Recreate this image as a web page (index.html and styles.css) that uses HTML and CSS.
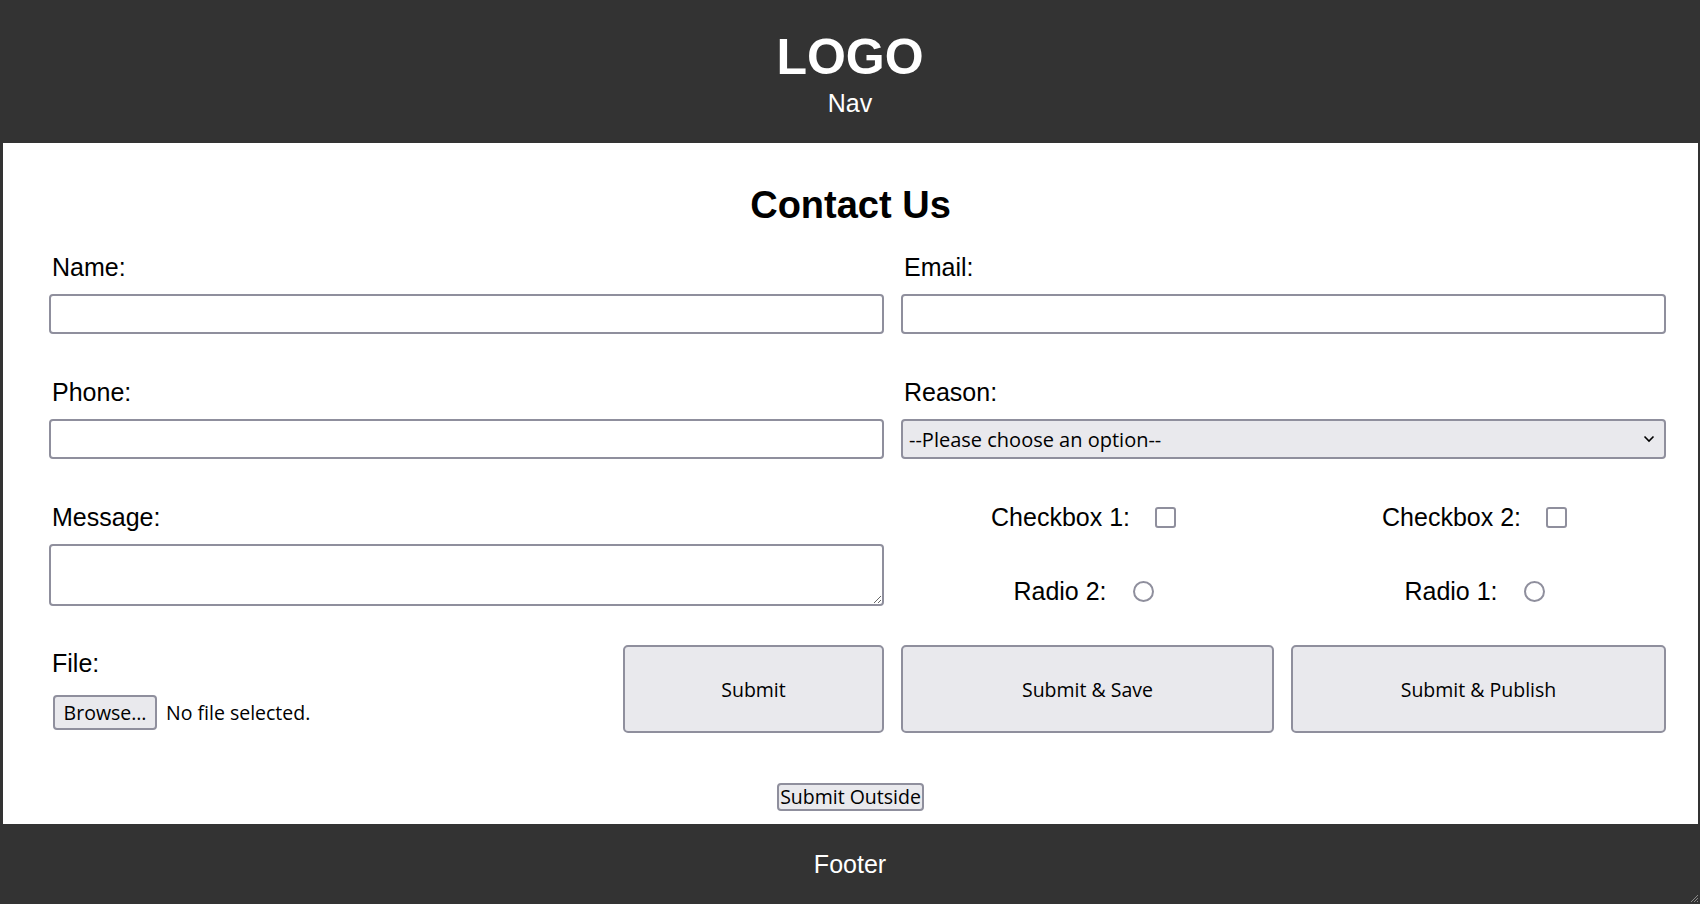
FILE: index.html
```html
<!DOCTYPE html>
<html lang="en">
<head>
<meta charset="utf-8">
<title>Contact Us</title>
<link rel="stylesheet" href="styles.css">
</head>
<body>
<header class="header">
  <h1 class="logo">LOGO</h1>
  <div class="nav">Nav</div>
</header>
<main class="main">
  <h2 class="title">Contact Us</h2>
  <form class="form" id="contact">
    <div class="field span2">
      <label for="name">Name:</label>
      <input class="text" id="name" type="text">
    </div>
    <div class="field span2">
      <label for="email">Email:</label>
      <input class="text" id="email" type="text">
    </div>
    <div class="field span2">
      <label for="phone">Phone:</label>
      <input class="text" id="phone" type="text">
    </div>
    <div class="field span2">
      <label for="reason">Reason:</label>
      <div class="select-wrap">
        <select id="reason" class="select">
          <option>--Please choose an option--</option>
        </select>
        <svg class="chev" width="12" height="8" viewBox="0 0 12 8"><path d="M1.5 1.5 L6 6 L10.5 1.5" fill="none" stroke="#000" stroke-width="1.6"/></svg>
      </div>
    </div>
    <div class="field span2">
      <label for="message">Message:</label>
      <textarea id="message" class="textarea"></textarea>
    </div>
    <div class="checks">
      <div class="check"><label for="cb1">Checkbox 1:</label><input id="cb1" class="box" type="checkbox"></div>
      <div class="check"><label for="r2">Radio 2:</label><input id="r2" class="circle" type="radio" name="r"></div>
    </div>
    <div class="checks">
      <div class="check"><label for="cb2">Checkbox 2:</label><input id="cb2" class="box" type="checkbox"></div>
      <div class="check"><label for="r1">Radio 1:</label><input id="r1" class="circle" type="radio" name="r"></div>
    </div>
    <div class="field file-field">
      <label>File:</label>
      <div class="file-row">
        <button type="button" class="browse">Browse…</button>
        <span class="nofile">No file selected.</span>
      </div>
    </div>
    <button type="submit" class="big">Submit</button>
    <button type="submit" class="big">Submit &amp; Save</button>
    <button type="submit" class="big">Submit &amp; Publish</button>
  </form>
  <div class="outside-wrap">
    <button type="submit" form="contact" class="outside">Submit Outside</button>
  </div>
</main>
<footer class="footer">
  Footer
  <svg class="grip" width="10" height="10" viewBox="0 0 10 10"><path d="M9 2 L2 9 M9 5 L5 9 M9 8 L8 9" stroke="#8a8a8a" stroke-width="1"/></svg>
</footer>
</body>
</html>
```

FILE: styles.css
```css
html, body {
  margin: 0;
  padding: 0;
}

body {
  background: #333333;
  font-family: "Liberation Sans", Arial, sans-serif;
  font-size: 25px;
  color: #000;
  height: 904px;
  display: flex;
  flex-direction: column;
  overflow: hidden;
}

.header {
  height: 143px;
  box-sizing: border-box;
  padding-top: 28px;
  text-align: center;
  color: #fff;
  flex: none;
}

.logo {
  margin: 0;
  font-size: 50px;
  line-height: 58px;
  font-weight: bold;
}

.nav {
  margin-top: 3px;
  line-height: 29px;
}

.main {
  flex: 1;
  background: #fff;
  margin: 0 2px 0 3px;
  padding-top: 40px;
  display: flex;
  flex-direction: column;
}

.title {
  margin: 0;
  font-size: 38px;
  line-height: 44px;
  font-weight: bold;
  text-align: center;
}

.form {
  display: grid;
  grid-template-columns: 557px 261px 373px 375px;
  column-gap: 17px;
  row-gap: 39px;
  align-items: start;
  margin: 21px 0 0 46px;
}

.field {
  display: flex;
  flex-direction: column;
}

.field > label {
  line-height: 29px;
  margin-top: 5px;
  margin-bottom: 12px;
  padding-left: 3px;
}

.file-field > label {
  margin-top: 4px;
  margin-bottom: 0;
}

.span2 {
  grid-column: span 2;
}

.text,
.textarea,
.select {
  box-sizing: border-box;
  width: 100%;
  border: 2px solid #8f8f9d;
  border-radius: 4px;
  margin: 0;
  font-family: "Open Sans", sans-serif;
  font-size: 19.5px;
  display: block;
}

.text {
  height: 40px;
  background: #fff;
}

.textarea {
  height: 62px;
  background: #fff;
  resize: vertical;
}

.select-wrap {
  position: relative;
}

.select {
  height: 40px;
  appearance: none;
  -webkit-appearance: none;
  background: #e9e9ed;
  color: #000;
  padding: 0 30px 0 6px;
  font-size: 20px;
}

.chev {
  position: absolute;
  right: 11px;
  top: 16px;
}

.checks {
  box-sizing: border-box;
  height: 108px;
  display: flex;
  flex-direction: column;
  align-items: center;
  justify-content: space-between;
  padding-top: 5px;
}

.check {
  display: flex;
  align-items: center;
  height: 29px;
  padding-right: 8px;
}

.box,
.circle {
  appearance: none;
  -webkit-appearance: none;
  box-sizing: border-box;
  border: 2px solid #8f8f9d;
  background: #fff;
  margin: 0;
}

.box {
  width: 21px;
  height: 21px;
  border-radius: 3px;
  margin-left: 25px;
}

.circle {
  width: 21px;
  height: 21px;
  border-radius: 50%;
  margin-left: 26px;
}

.file-row {
  display: flex;
  align-items: center;
  margin-top: 17px;
  padding-left: 4px;
  font-family: "Open Sans", sans-serif;
  font-size: 19.5px;
}

.browse,
.big,
.outside {
  font-family: "Open Sans", sans-serif;
  font-size: 19.5px;
  color: #000;
  background: #e9e9ed;
  border: 2px solid #8f8f9d;
  border-radius: 4px;
  box-sizing: border-box;
  margin: 0;
}

.browse {
  width: 104px;
  height: 35px;
  padding: 0;
}

.nofile {
  margin-left: 9px;
}

.big {
  height: 88px;
  width: 100%;
  border-radius: 5px;
}

.outside-wrap {
  text-align: center;
  margin-top: 48px;
}

.outside {
  height: 28px;
  padding: 0 1px;
  line-height: 22px;
}

.footer {
  position: relative;
  height: 80px;
  flex: none;
  display: flex;
  align-items: center;
  justify-content: center;
  color: #fff;
}

.grip {
  position: absolute;
  right: 1px;
  bottom: 1px;
}
```
